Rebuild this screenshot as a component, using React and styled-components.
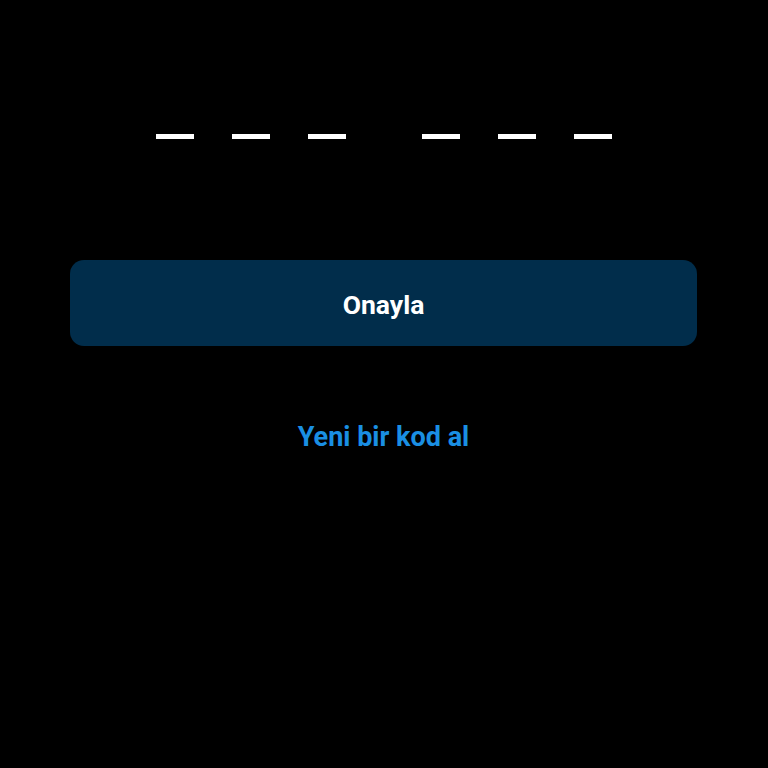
import React from "react";
import styled, { createGlobalStyle } from "styled-components";

const Global = createGlobalStyle`
  html, body { margin: 0; padding: 0; background: #000; }
  body { font-family: Roboto, "Noto Sans", sans-serif; }
`;

const Page = styled.div`
  width: 768px;
  height: 768px;
  background: #000;
  display: flex;
  flex-direction: column;
  align-items: stretch;
  padding: 134px 71px 0 70px;
  box-sizing: border-box;
`;

const CodeRow = styled.div`
  display: flex;
  justify-content: center;
  gap: 76px;
`;

const Group = styled.div`
  display: flex;
  gap: 38px;
`;

const Slot = styled.div`
  width: 38px;
  height: 5px;
  background: #fff;
`;

const Button = styled.button`
  margin-top: 121px;
  height: 86px;
  padding: 3px 0 0;
  border: none;
  border-radius: 14px;
  background: #012d4b;
  color: #fff;
  font-family: Roboto, sans-serif;
  font-weight: 700;
  font-size: 26.5px;
  display: flex;
  align-items: center;
  justify-content: center;
`;

const Link = styled.div`
  margin-top: 75px;
  text-align: center;
  color: #1a8fe3;
  font-family: Roboto, sans-serif;
  font-weight: 700;
  font-size: 27px;
  line-height: 32px;
`;

export default function App() {
  return (
    <>
      <Global />
      <Page>
        <CodeRow>
          <Group>
            <Slot />
            <Slot />
            <Slot />
          </Group>
          <Group>
            <Slot />
            <Slot />
            <Slot />
          </Group>
        </CodeRow>
        <Button>Onayla</Button>
        <Link>Yeni bir kod al</Link>
      </Page>
    </>
  );
}
